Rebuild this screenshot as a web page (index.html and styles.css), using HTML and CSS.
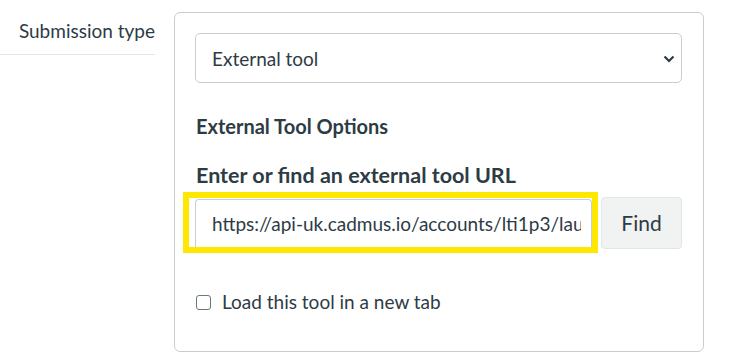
FILE: index.html
```html
<!DOCTYPE html>
<html lang="en">
	<head>
		<title>Submission type</title>
		<meta charset="utf-8"/>
		<link rel="stylesheet" href="styles.css">
	</head>
	<body>
		<div class="formRow">
			<div class="labelCol">
				<label class="rowLabel" for="submissionType">Submission type</label>
			</div>

			<div class="optionsBox">
				<div class="selectWrap">
					<select id="submissionType" class="typeSelect">
						<option>External tool</option>
					</select>
					<svg class="chevron" width="12" height="8" viewBox="0 0 12 8">
						<path d="M1.5 1.5 L6 6 L10.5 1.5" fill="none" stroke="#2d3b45" stroke-width="2.2"/>
					</svg>
				</div>

				<h3 class="toolHeader">External Tool Options</h3>
				<label class="urlLabel" for="toolUrl">Enter or find an external tool URL</label>

				<div class="urlRow">
					<div class="highlight">
						<input id="toolUrl" class="urlInput" type="text" value="https://api-uk.cadmus.io/accounts/lti1p3/launch">
					</div>
					<button class="findBtn">Find</button>
				</div>

				<label class="newTab">
					<span class="checkBox"></span>
					Load this tool in a new tab
				</label>
			</div>
		</div>
	</body>
</html>
```

FILE: styles.css
```css
body, html {
	margin: 0px;
	background-color: #ffffff;
	font-family: 'Lato', 'Noto Sans', sans-serif;
	color: #2d3b45;
}

.formRow {
	display: flex;
	align-items: flex-start;
}

.labelCol {
	width: 155px;
	flex-shrink: 0;
	border-bottom: 1px solid #e3e6e8;
	padding-top: 19px;
	padding-bottom: 11px;
	text-align: right;
}
.rowLabel {
	font-size: 19px;
	line-height: 24px;
}

.optionsBox {
	width: 487px;
	height: 298px;
	margin-top: 12px;
	margin-left: 19px;
	padding: 20px 21px 20px 20px;
	border: 1px solid #c7cdd1;
	border-radius: 6px;
	display: flex;
	flex-direction: column;
}

.selectWrap {
	position: relative;
	height: 50px;
}
.typeSelect {
	appearance: none;
	-webkit-appearance: none;
	width: 100%;
	height: 50px;
	border: 1px solid #c7cdd1;
	border-radius: 5px;
	background-color: #ffffff;
	padding: 0 16px;
	font-family: inherit;
	font-size: 19px;
	color: #2d3b45;
}
.chevron {
	position: absolute;
	right: 7px;
	top: 22px;
}

.toolHeader {
	margin: 31px 0 0 1px;
	font-size: 20px;
	line-height: 24px;
	font-weight: bold;
}
.urlLabel {
	margin: 23px 0 0 1px;
	font-size: 21.5px;
	line-height: 28px;
	font-weight: bold;
}

.urlRow {
	display: flex;
	align-items: center;
	margin-top: 3px;
	margin-left: -12px;
}
.highlight {
	border: 6px solid #ffe800;
	padding: 1px 0 0 6px;
	background-color: #ffffff;
}
.urlInput {
	box-sizing: border-box;
	width: 397px;
	height: 48px;
	border: 1px solid #c7cdd1;
	border-bottom: none;
	border-radius: 4px 4px 0 0;
	padding: 0 10px 0 16px;
	font-family: inherit;
	font-size: 19px;
	color: #2d3b45;
	display: block;
}
.findBtn {
	margin-left: 3px;
	width: 81px;
	height: 52px;
	background-color: #f1f2f2;
	border: 1px solid #e3e6e8;
	border-radius: 4px;
	font-family: inherit;
	font-size: 21px;
	color: #2d3b45;
}

.newTab {
	margin-top: 37px;
	margin-left: 1px;
	display: flex;
	align-items: center;
	font-size: 19px;
	line-height: 24px;
}
.checkBox {
	width: 13px;
	height: 13px;
	border: 1px solid #6b7780;
	border-radius: 3px;
	margin-right: 11px;
}
```
